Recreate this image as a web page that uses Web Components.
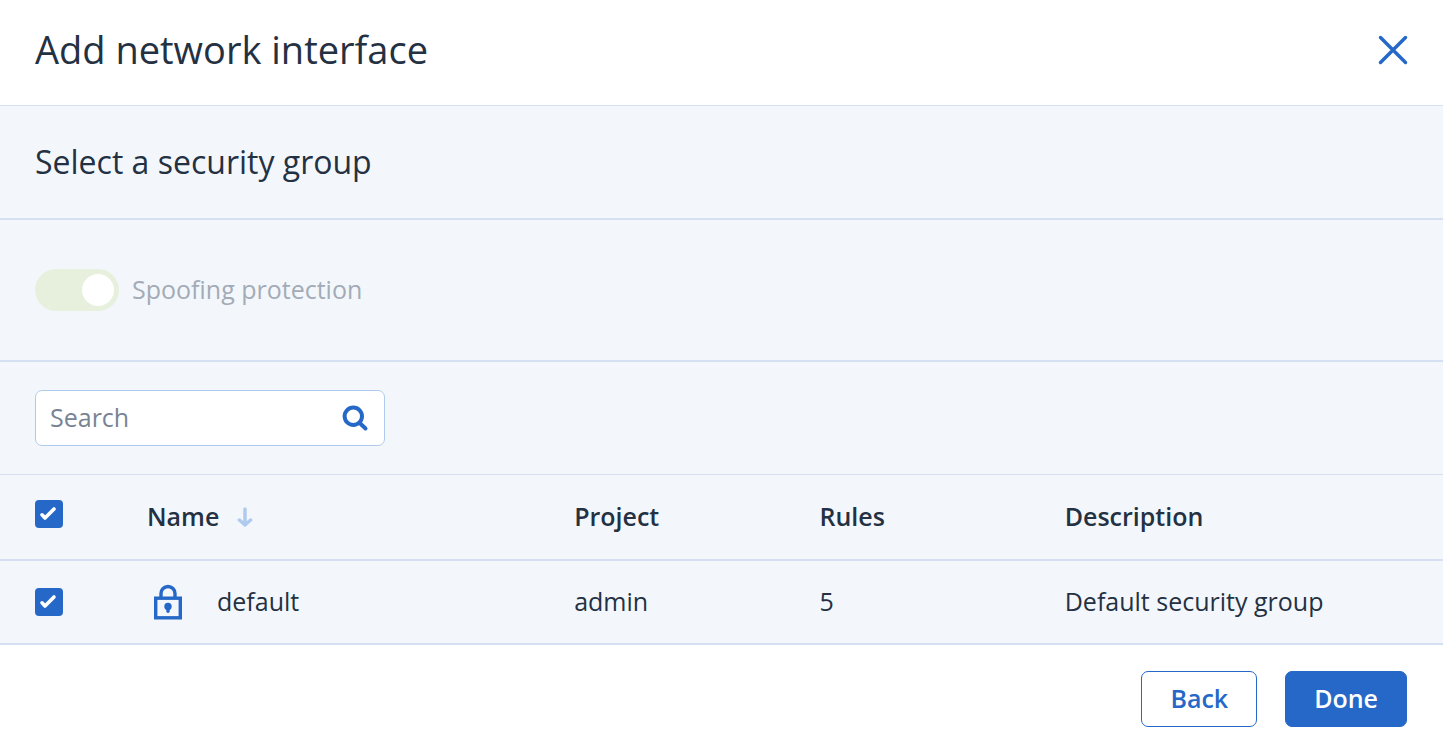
<!DOCTYPE html>
<html lang="en">
<head>
<meta charset="utf-8">
<meta name="viewport" content="width=device-width, initial-scale=1">
<title>Add network interface</title>
<style>
  body {
    margin: 0;
    background: #fff;
    color: #243143;
    font: 400 25px/36px "Open Sans", "Noto Sans", sans-serif;
    --blue: #2568c7;
    --line: #d5e0f2;
    --panel: #f3f7fc;
    --soft-blue: #b0caee;
    --gutter: 35px;
    --strong: 600;
  }
</style>
</head>
<body>
<wizard-dialog>
  <wizard-header slot="header">Add network interface</wizard-header>
  <wizard-section><section-title>Select a security group</section-title></wizard-section>
  <wizard-section class="tall"><toggle-switch>Spoofing protection</toggle-switch></wizard-section>
  <wizard-section class="thin"><search-field></search-field></wizard-section>
  <group-table></group-table>
  <action-button slot="footer">Back</action-button>
  <action-button slot="footer" primary>Done</action-button>
</wizard-dialog>

<script>
const define = (name, html, setup) => customElements.define(name, class extends HTMLElement {
  constructor() {
    super();
    this.attachShadow({ mode: "open" }).innerHTML = html;
  }
  connectedCallback() {
    if (setup) setup(this, this.shadowRoot);
  }
});

define("wizard-dialog", `
  <style>
    :host { display: block; }
    main { background: var(--panel); }
    footer { display: flex; justify-content: flex-end; gap: 28px; padding: 26px 36px 19px; }
  </style>
  <slot name="header"></slot>
  <main><slot></slot></main>
  <footer><slot name="footer"></slot></footer>
`);

define("wizard-header", `
  <style>
    :host {
      display: flex; align-items: center; justify-content: space-between;
      padding: 20px 35px 25px; border-bottom: 1px solid var(--line);
    }
    h1 { margin: 0; padding-bottom: 2px; font-weight: inherit; font-size: 38px; line-height: 58px; }
    button { display: block; padding: 0; border: 0; background: none; color: var(--blue); cursor: pointer; }
    svg { display: block; }
  </style>
  <h1><slot></slot></h1>
  <button type="button" aria-label="Close">
    <svg width="30" height="30" viewBox="0 0 30 30" fill="none" stroke="currentColor" stroke-width="3.500" stroke-linecap="round"><path d="M2.500 2.500l25 25M27.500 2.500l-25 25"/></svg>
  </button>
`);

define("wizard-section", `
  <style>
    :host { display: block; padding: 28px var(--gutter); border-bottom: 2px solid var(--line); }
    :host(.tall) { padding-block: 49px; }
    :host(.thin) { border-bottom-width: 1px; }
  </style>
  <slot></slot>
`);

define("section-title", `
  <style>
    :host { display: block; }
    h2 { margin: 0; font-weight: inherit; font-size: 32px; line-height: 56px; }
  </style>
  <h2><slot></slot></h2>
`);

define("toggle-switch", `
  <style>
    :host { display: block; }
    label { display: flex; align-items: center; gap: 13px; width: fit-content; color: #a3abb7; }
    input {
      appearance: none; box-sizing: border-box; display: flex; justify-content: flex-end;
      width: 84px; height: 42px; margin: 0; padding: 5px; border-radius: 21px; background: #e7f0dd;
    }
    input::before { content: ""; width: 32px; height: 32px; border-radius: 50%; background: #fff; }
    span { padding-bottom: 2px; }
  </style>
  <label><input type="checkbox" role="switch" checked disabled><span><slot></slot></span></label>
`);

define("search-field", `
  <style>
    :host { display: block; }
    .box {
      box-sizing: border-box; display: flex; align-items: center; width: 350px; max-width: 100%; height: 56px;
      padding: 0 15px 0 14px; border: 1px solid var(--soft-blue); border-radius: 7px; background: #fff;
    }
    input {
      flex: 1; min-width: 0; padding: 0 0 2px; border: 0; outline: 0; background: none;
      color: inherit; font: inherit; appearance: none;
    }
    input::placeholder { color: #788494; opacity: 1; }
    button { padding: 0; border: 0; background: none; color: var(--blue); cursor: pointer; }
    svg { display: block; }
  </style>
  <div class="box">
    <input type="search" placeholder="Search" aria-label="Search">
    <button type="button" aria-label="Run search">
      <svg width="28" height="28" viewBox="0 0 28 28" fill="none" stroke="currentColor" stroke-width="4" stroke-linecap="round"><circle cx="12.300" cy="12.300" r="8.700"/><path d="M18.700 19l5.800 5.500"/></svg>
    </button>
  </div>
`);

define("check-box", `
  <style>
    :host { display: block; width: 28px; height: 28px; }
    label { display: grid; }
    input, svg { grid-area: 1 / 1; }
    input { appearance: none; width: 28px; height: 28px; margin: 0; border-radius: 4px; background: var(--blue); }
    svg { display: block; pointer-events: none; }
    input:not(:checked) { background: #fff; box-shadow: inset 0 0 0 1px var(--soft-blue); }
  </style>
  <label>
    <input type="checkbox" checked>
    <svg width="28" height="28" viewBox="0 0 28 28" fill="none" stroke="#fff" stroke-width="3.600" stroke-linecap="round" stroke-linejoin="round"><path d="M7 14.800l3 3.200L19 9"/></svg>
  </label>
`, (host, root) => root.querySelector("input").setAttribute("aria-label", host.getAttribute("label")));

define("group-table", `
  <style>
    :host { display: block; }
    table { width: 100%; table-layout: fixed; border-collapse: separate; border-spacing: 0; }
    .pick { width: 147px; }
    .name { width: 29.6%; }
    .mid { width: 17%; }
    th, td { box-sizing: border-box; padding: 0 0 2px; text-align: left; vertical-align: middle; border-bottom: 2px solid var(--line); }
    th { height: 86px; font-weight: var(--strong); }
    td { height: 84px; }
    th:first-child { padding: 0 0 6px var(--gutter); }
    td:first-child { padding: 0 0 0 var(--gutter); }
    .sort { display: flex; align-items: center; gap: 18px; padding: 0; border: 0; background: none; color: inherit; font: inherit; cursor: pointer; }
    .item { display: flex; align-items: center; gap: 28px; }
    svg { display: block; }
    .arrow { color: var(--soft-blue); }
    .lock { color: var(--blue); }
  </style>
  <table>
    <colgroup><col class="pick"><col class="name"><col class="mid"><col class="mid"><col></colgroup>
    <thead>
      <tr>
        <th><check-box label="Select all security groups"></check-box></th>
        <th aria-sort="descending"><button type="button" class="sort">Name
          <svg class="arrow" width="16" height="22" viewBox="0 0 16 22" fill="none" stroke="currentColor" stroke-width="3.400" stroke-linecap="round" stroke-linejoin="round"><path d="M8 4v15.500M2.400 15L8 20l5.600-5"/></svg>
        </button></th>
        <th>Project</th>
        <th>Rules</th>
        <th>Description</th>
      </tr>
    </thead>
    <tbody>
      <tr>
        <td><check-box label="Select default"></check-box></td>
        <td><div class="item">
          <svg class="lock" width="42" height="42" viewBox="0 0 42 42" fill="none" stroke="currentColor" stroke-width="3.400"><rect x="8.700" y="18.200" width="24.600" height="19.600"/><path d="M14 18v-4.500a7 7 0 0 1 14 0V18"/><circle cx="21" cy="26.500" r="3.700" fill="currentColor" stroke="none"/><path d="M21 27v4.200" stroke-linecap="round"/></svg>
          default</div></td>
        <td>admin</td>
        <td>5</td>
        <td>Default security group</td>
      </tr>
    </tbody>
  </table>
`);

define("action-button", `
  <style>
    :host { display: block; }
    button {
      box-sizing: border-box; display: block; height: 56px; padding: 0 28px 2px; border: 1px solid var(--blue); border-radius: 7px;
      background: #fff; color: var(--blue); font: inherit; font-weight: var(--strong); cursor: pointer;
    }
    :host([primary]) button { background: var(--blue); color: #fff; }
  </style>
  <button type="button"><slot></slot></button>
`);
</script>
</body>
</html>
